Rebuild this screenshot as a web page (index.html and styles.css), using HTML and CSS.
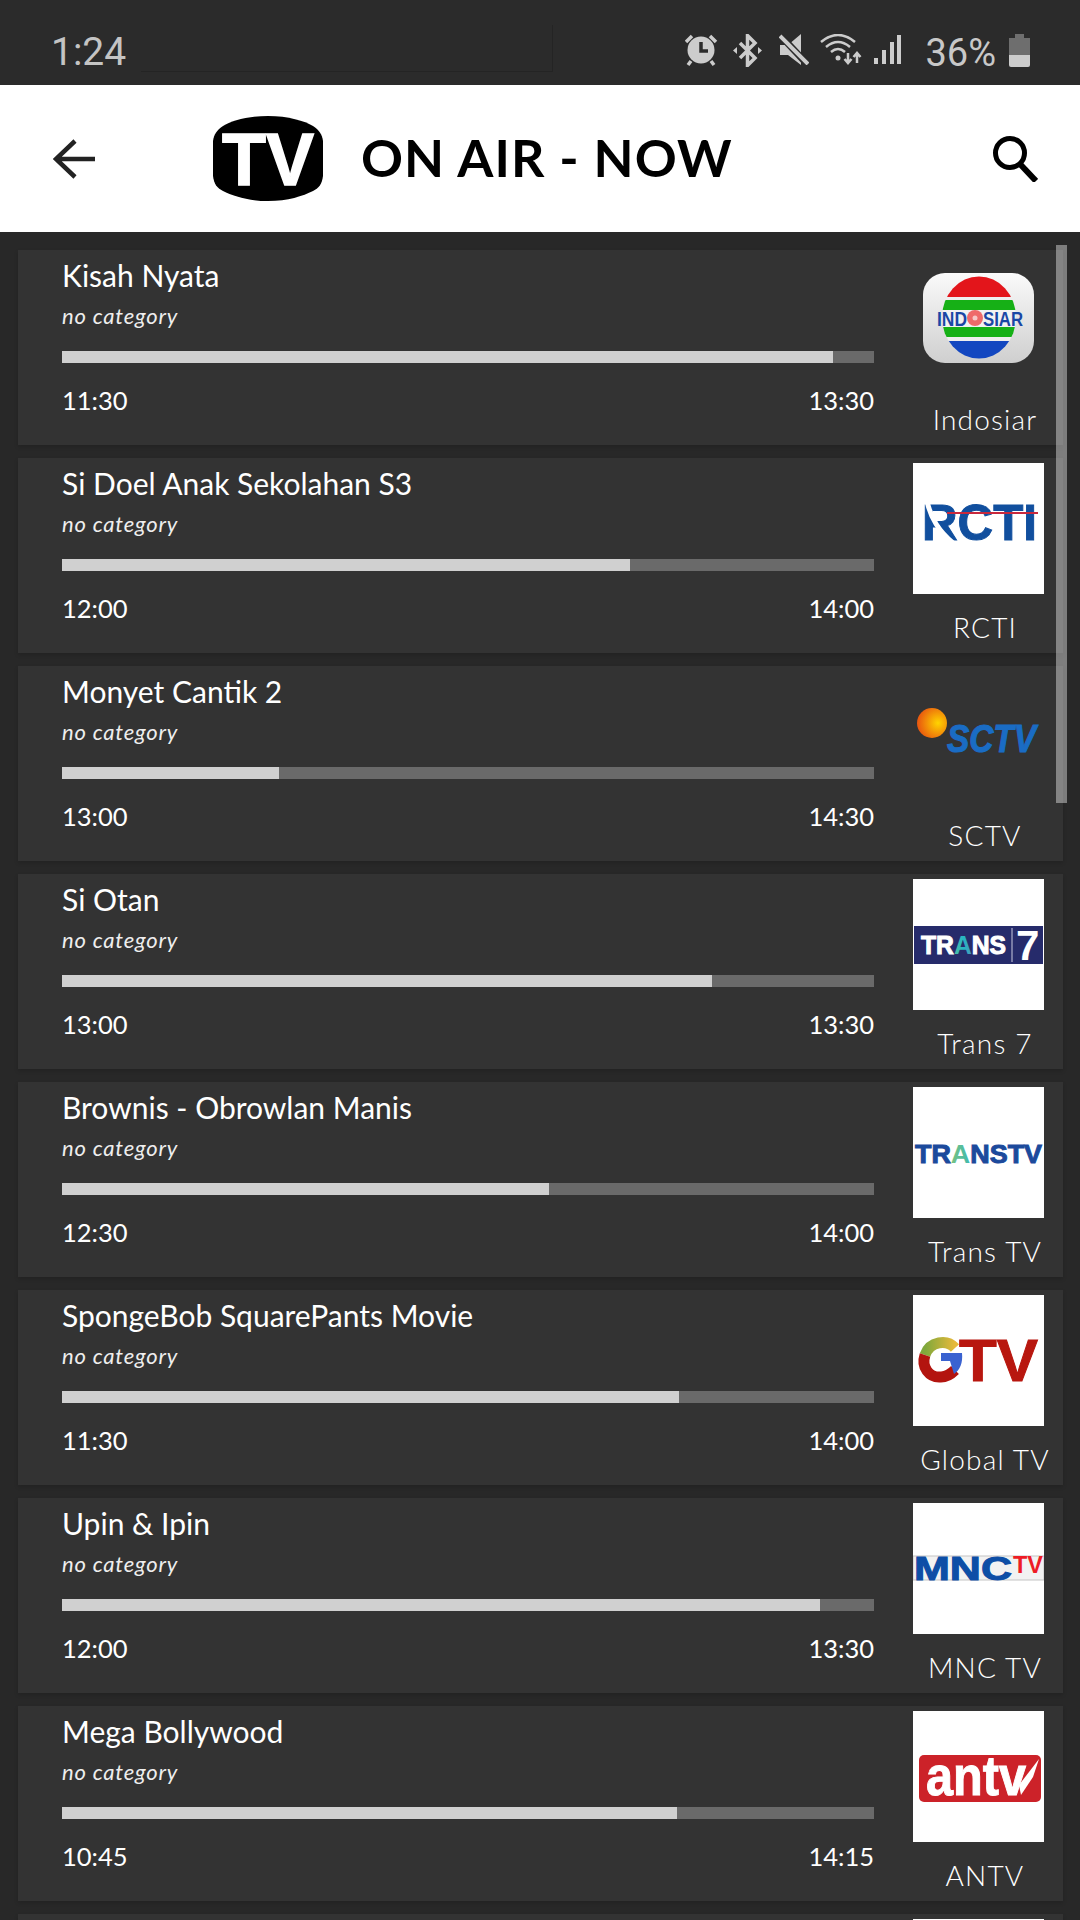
FILE: index.html
```html
<!DOCTYPE html>
<html lang="en">

<head>
  <meta charset="UTF-8">
  <title>On Air - Now</title>
  <meta name="viewport" content="width=device-width, initial-scale=1">
  <link rel="stylesheet" href="styles.css">
</head>

<body>
  <div class="statusbar">
    <span class="clock">1:24</span>
    <span class="status-mark"></span>
    <div class="status-icons">
      <svg width="37" height="33" viewBox="0 0 37 33">
        <g class="ico-line"><path d="M1 8 7 2M25 2l6 6M6 27l-3 4M26 27l3 4" /></g>
        <circle cx="16" cy="16" r="13.5" fill="#ccc" />
        <path d="M16 8v9h7" fill="none" stroke="#2b2b2b" stroke-width="3.5" />
      </svg>
      <svg width="35" height="33" viewBox="0 0 35 33">
        <path class="ico-line" d="M7 9 22 24l-7.500 7.500v-30L22 9 7 24" />
        <path d="M0 16.500 4 13v7zM29 16.500 25 13v7z" fill="#ccc" />
      </svg>
      <svg width="30" height="31" viewBox="0 0 30 31">
        <path d="M1 11h8L22 0v31L9 21H1z" fill="#ccc" />
        <path d="M0 0 30 32" stroke="#2b2b2b" stroke-width="7" />
        <path d="M1 2 29 30" stroke="#ccc" stroke-width="4" />
      </svg>
      <svg width="42" height="31" viewBox="0 0 42 31">
        <g class="ico-thin">
          <path d="M1 8Q18-6 35 8" />
          <path d="M6 13Q18 3 30 13" />
          <path d="M11 18Q18 12 25 18" />
          <path d="M28 19v10M24.500 25l3.500 4 3.500-4" />
          <path d="M37 29V19M33.500 23l3.500-4 3.500 4" />
        </g>
        <circle cx="18" cy="24" r="2.500" fill="#ccc" />
      </svg>
      <svg width="41" height="30" viewBox="0 0 41 30">
        <path d="M1 24h4v6H1zM9 16h4v14H9zM17 8h4v22h-4zM24 1h4v29h-4z" fill="#ccc" />
      </svg>
      <span class="battery-text">36%</span>
      <svg width="21" height="33" viewBox="0 0 21 33">
        <path d="M6 0h9v4h6v17H0V4h6z" fill="#6e6e6e" />
        <path d="M0 21h21v10a2 2 0 0 1-2 2H2a2 2 0 0 1-2-2z" fill="#ccc" />
      </svg>
    </div>
  </div>

  <header>
    <svg class="back" width="42" height="40" viewBox="0 0 42 40">
      <path d="M42 20H3M22 2 3 20l19 18" fill="none" stroke="#222" stroke-width="4.500" />
    </svg>
    <svg class="tv-logo" width="110" height="85" viewBox="0 0 110 85">
      <path d="M55 0C75 0 92 5 100 10c6 4 9 8 10 15v35c-1 8-4 12-10 15-10 5-25 10-45 10S20 80 10 75C4 72 1 68 0 60V25c1-7 4-11 10-15C18 5 35 0 55 0z" fill="#000" />
      <text class="tv-letters" x="9" y="69" textLength="92" lengthAdjust="spacingAndGlyphs">TV</text>
    </svg>
    <h1>ON AIR - NOW</h1>
    <svg class="search" width="46" height="46" viewBox="0 0 46 46">
      <circle cx="18" cy="17" r="14.500" fill="none" stroke="#000" stroke-width="5" />
      <path d="M28 28 44 45" stroke="#000" stroke-width="6" />
    </svg>
  </header>

  <div class="scrollbar"></div>

  <ul class="list">
    <li class="card">
      <div class="info">
        <div class="title">Kisah Nyata</div>
        <div class="category">no category</div>
        <div class="bar"><div class="fill" style="width:94.9%"></div></div>
        <div class="times"><span>11:30</span><span>13:30</span></div>
      </div>
      <div class="channel">
        <div class="logo-box">
          <svg class="logo-indosiar" width="111" height="90" viewBox="0 0 111 90">
            <defs>
              <linearGradient id="plate" x1="0" y1="0" x2="0" y2="1">
                <stop offset="0" stop-color="#fafafa" />
                <stop offset="1" stop-color="#cfcfcf" />
              </linearGradient>
              <clipPath id="globe"><ellipse cx="56" cy="44.500" rx="37" ry="41" /></clipPath>
            </defs>
            <rect width="111" height="90" rx="22" fill="url(#plate)" />
            <g clip-path="url(#globe)">
              <rect x="15" width="82" height="24" fill="#e3151b" />
              <rect x="15" y="24" width="82" height="3" fill="#eee" />
              <rect x="15" y="27" width="82" height="10" fill="#16b016" />
              <rect x="15" y="37" width="82" height="17" fill="#f2f2f2" />
              <rect x="15" y="54" width="82" height="10" fill="#16b016" />
              <rect x="15" y="64" width="82" height="4" fill="#eee" />
              <rect x="15" y="68" width="82" height="20" fill="#1347c0" />
            </g>
            <circle cx="52" cy="45" r="8" fill="#ef6a6a" />
            <circle cx="52" cy="45" r="2.500" fill="#f7c7c7" />
            <text class="mark mark-indosiar" x="14" y="53" textLength="30" lengthAdjust="spacingAndGlyphs">IND</text>
            <text class="mark mark-indosiar" x="60" y="53" textLength="40" lengthAdjust="spacingAndGlyphs">SIAR</text>
          </svg>
        </div>
        <div class="channel-name">Indosiar</div>
      </div>
    </li>

    <li class="card">
      <div class="info">
        <div class="title">Si Doel Anak Sekolahan S3</div>
        <div class="category">no category</div>
        <div class="bar"><div class="fill" style="width:70%"></div></div>
        <div class="times"><span>12:00</span><span>14:00</span></div>
      </div>
      <div class="channel">
        <div class="logo-box logo-white">
          <svg width="131" height="131" viewBox="0 0 131 131">
            <text class="mark mark-heavy" x="9" y="77" font-size="50" fill="#114f9e" stroke="#114f9e" textLength="115" lengthAdjust="spacingAndGlyphs">RCTI</text>
            <path d="M14 38C18 56 26 68 40 80" fill="none" stroke="#fff" stroke-width="5" />
            <path d="M34 50H125" stroke="#c8283c" stroke-width="2" />
          </svg>
        </div>
        <div class="channel-name">RCTI</div>
      </div>
    </li>

    <li class="card">
      <div class="info">
        <div class="title">Monyet Cantik 2</div>
        <div class="category">no category</div>
        <div class="bar"><div class="fill" style="width:26.7%"></div></div>
        <div class="times"><span>13:00</span><span>14:30</span></div>
      </div>
      <div class="channel">
        <div class="logo-box">
          <svg width="131" height="131" viewBox="0 0 131 131">
            <defs>
              <radialGradient id="ball" cx="0.7" cy="0.5" r="0.7">
                <stop offset="0" stop-color="#ffd400" />
                <stop offset="1" stop-color="#e8540f" />
              </radialGradient>
            </defs>
            <text class="mark mark-slant mark-heavy" transform="translate(34 81) scale(1 1.12)" font-size="35" fill="#1a6cc4" stroke="#1a6cc4" textLength="89" lengthAdjust="spacingAndGlyphs">SCTV</text>
            <circle cx="19" cy="52" r="15" fill="url(#ball)" />
          </svg>
        </div>
        <div class="channel-name">SCTV</div>
      </div>
    </li>

    <li class="card">
      <div class="info">
        <div class="title">Si Otan</div>
        <div class="category">no category</div>
        <div class="bar"><div class="fill" style="width:80%"></div></div>
        <div class="times"><span>13:00</span><span>13:30</span></div>
      </div>
      <div class="channel">
        <div class="logo-box logo-white">
          <svg width="131" height="131" viewBox="0 0 131 131">
            <defs>
              <linearGradient id="rainbow" x1="0" y1="0" x2="1" y2="0">
                <stop offset="0" stop-color="#e5d12a" />
                <stop offset="0.5" stop-color="#25b6c4" />
                <stop offset="1" stop-color="#d5208c" />
              </linearGradient>
            </defs>
            <rect x="1" y="47" width="129" height="38" fill="#262b6b" />
            <text class="mark mark-heavy" x="8" y="75" font-size="25" fill="#fff" stroke="#fff" textLength="85" lengthAdjust="spacingAndGlyphs">TR<tspan fill="url(#rainbow)" stroke="none">A</tspan>NS</text>
            <path d="M99 49V83" stroke="#c9cbe0" stroke-width="1" />
            <text class="mark" x="103" y="81" font-size="42" fill="#fff">7</text>
          </svg>
        </div>
        <div class="channel-name">Trans 7</div>
      </div>
    </li>

    <li class="card">
      <div class="info">
        <div class="title">Brownis - Obrowlan Manis</div>
        <div class="category">no category</div>
        <div class="bar"><div class="fill" style="width:60%"></div></div>
        <div class="times"><span>12:30</span><span>14:00</span></div>
      </div>
      <div class="channel">
        <div class="logo-box logo-white">
          <svg width="131" height="131" viewBox="0 0 131 131">
            <text class="mark mark-heavy" x="2" y="76" font-size="26" fill="#1c4a9c" stroke="#1c4a9c" textLength="127" lengthAdjust="spacingAndGlyphs">TR<tspan fill="url(#rainbow)" stroke="none">A</tspan>NSTV</text>
          </svg>
        </div>
        <div class="channel-name">Trans TV</div>
      </div>
    </li>

    <li class="card">
      <div class="info">
        <div class="title">SpongeBob SquarePants Movie</div>
        <div class="category">no category</div>
        <div class="bar"><div class="fill" style="width:76%"></div></div>
        <div class="times"><span>11:30</span><span>14:00</span></div>
      </div>
      <div class="channel">
        <div class="logo-box logo-white">
          <svg width="131" height="131" viewBox="0 0 131 131">
            <defs>
              <linearGradient id="g-arc" x1="0" y1="0" x2="1" y2="0">
                <stop offset="0" stop-color="#7fa83c" />
                <stop offset="1" stop-color="#e8b93a" />
              </linearGradient>
            </defs>
            <path d="M42 53C34 44 17 46 12 60" fill="none" stroke="url(#g-arc)" stroke-width="11" />
            <path d="M12 60C8 72 16 83 28 82 34 82 38 79 42 75" fill="none" stroke="#b3140f" stroke-width="11" />
            <path d="M28 58H49C50 68 47 75 41 79L37 66H28z" fill="#3a62d0" />
            <text class="mark mark-heavy" x="46" y="86" font-size="59" fill="#b8170f" stroke="#b8170f" textLength="79" lengthAdjust="spacingAndGlyphs">TV</text>
          </svg>
        </div>
        <div class="channel-name">Global TV</div>
      </div>
    </li>

    <li class="card">
      <div class="info">
        <div class="title">Upin &amp; Ipin</div>
        <div class="category">no category</div>
        <div class="bar"><div class="fill" style="width:93.3%"></div></div>
        <div class="times"><span>12:00</span><span>13:30</span></div>
      </div>
      <div class="channel">
        <div class="logo-box logo-white">
          <svg width="131" height="131" viewBox="0 0 131 131">
            <rect x="0" y="53" width="131" height="24" fill="#f2f2f2" stroke="#c4c4c4" stroke-width="1" />
            <text class="mark mark-heavy" x="1" y="77" font-size="33" fill="#0d4ea6" stroke="#0d4ea6" textLength="98" lengthAdjust="spacingAndGlyphs">MNC</text>
            <text class="mark" x="100" y="70" font-size="23" fill="#ee1c25" textLength="30" lengthAdjust="spacingAndGlyphs">TV</text>
          </svg>
        </div>
        <div class="channel-name">MNC TV</div>
      </div>
    </li>

    <li class="card">
      <div class="info">
        <div class="title">Mega Bollywood</div>
        <div class="category">no category</div>
        <div class="bar"><div class="fill" style="width:75.7%"></div></div>
        <div class="times"><span>10:45</span><span>14:15</span></div>
      </div>
      <div class="channel">
        <div class="logo-box logo-white">
          <svg width="131" height="131" viewBox="0 0 131 131">
            <rect x="6" y="44" width="122" height="47" rx="5" fill="#cc2229" />
            <text class="mark mark-heavy" x="13" y="84" font-size="56" fill="#fff" stroke="#fff" textLength="100" lengthAdjust="spacingAndGlyphs">antv</text>
            <path d="M106 74 126 48 120 66 108 84z" fill="#fff" />
          </svg>
        </div>
        <div class="channel-name">ANTV</div>
      </div>
    </li>

    <li class="card">
      <div class="info"></div>
      <div class="channel">
        <div class="logo-box logo-white"></div>
      </div>
    </li>
  </ul>
</body>

</html>
```

FILE: styles.css
```css
html,
body {
  margin: 0;
  padding: 0;
}

body {
  width: 1080px;
  height: 1920px;
  overflow: hidden;
  position: relative;
  background: #282828;
  font-family: Lato, sans-serif;
  color: #fff;
}

.statusbar {
  height: 85px;
  background: #2b2b2b;
  display: flex;
  align-items: center;
  padding: 0 50px 0 51px;
  box-sizing: border-box;
}

.clock {
  font-family: Roboto, sans-serif;
  font-size: 39px;
  color: #c4c4c4;
  padding-top: 18px;
  width: 75px;
}

.status-mark {
  align-self: flex-start;
  width: 411px;
  height: 46px;
  margin: 25px 0 0 15px;
  border-right: 1px solid #242424;
  border-bottom: 1px solid #242424;
}

.status-icons {
  align-self: flex-start;
  margin-left: auto;
  display: flex;
  align-items: flex-start;
  gap: 11px;
  padding-top: 34px;
}

.battery-text {
  font-family: Roboto, sans-serif;
  font-size: 38px;
  line-height: 38px;
  color: #c8c8c8;
  margin-right: 2px;
}

.ico-line {
  fill: none;
  stroke: #ccc;
  stroke-width: 3.5;
}

.ico-thin {
  fill: none;
  stroke: #ccc;
  stroke-width: 2.5;
}

header {
  height: 147px;
  background: #fff;
  display: flex;
  align-items: center;
  padding: 0 42px 0 53px;
  box-sizing: border-box;
}

.tv-logo {
  margin-left: 118px;
}

.tv-letters {
  font-family: "Liberation Sans", sans-serif;
  font-weight: bold;
  font-size: 75px;
  fill: #fff;
  stroke: #fff;
  stroke-width: 1.5;
}

h1 {
  margin: 0 0 4px 38px;
  font-size: 52px;
  font-weight: 700;
  letter-spacing: 1.1px;
  color: #000;
  white-space: nowrap;
}

.search {
  margin-left: auto;
}

.list {
  list-style: none;
  margin: 0;
  padding: 18px 17px 0 18px;
  display: flex;
  flex-direction: column;
  gap: 13px;
}

.card {
  height: 195px;
  flex: none;
  background: #333;
  display: flex;
  box-shadow: 0 2px 4px rgba(0, 0, 0, 0.15);
}

.info {
  width: 812px;
  margin-left: 44px;
  padding-top: 6px;
}

.title {
  font-size: 30px;
  line-height: 38px;
  white-space: nowrap;
}

.category {
  font-size: 22px;
  font-style: italic;
  line-height: 26px;
  margin-top: 9px;
  letter-spacing: 0.8px;
  color: #eee;
}

.bar {
  height: 12px;
  background: #6a6a6a;
  margin-top: 22px;
}

.fill {
  height: 100%;
  background: #d0d0d0;
}

.times {
  display: flex;
  justify-content: space-between;
  font-size: 25.5px;
  line-height: 32px;
  margin-top: 21px;
}

.channel {
  width: 156px;
  margin-left: 33px;
  padding-top: 5px;
}

.logo-box {
  width: 131px;
  height: 131px;
  margin-left: 6px;
  display: flex;
  align-items: center;
  justify-content: center;
}

.logo-white {
  background: #fff;
}

.logo-indosiar {
  margin-bottom: 5px;
}

.channel-name {
  margin-top: 16px;
  font-size: 28px;
  font-weight: 300;
  line-height: 34px;
  letter-spacing: 1.2px;
  text-align: center;
  white-space: nowrap;
  color: #fff;
}

.mark {
  font-family: "Liberation Sans", sans-serif;
  font-weight: bold;
}

.mark-heavy {
  stroke-width: 1;
}

.mark-indosiar {
  font-size: 21px;
  fill: #1a47a5;
}

.mark-slant {
  font-style: italic;
}

/* overlay scrollbar, sits on top of the list */
.scrollbar {
  position: absolute;
  left: 1056px;
  top: 245px;
  width: 11px;
  height: 558px;
  background: rgba(255, 255, 255, 0.4);
}
```
